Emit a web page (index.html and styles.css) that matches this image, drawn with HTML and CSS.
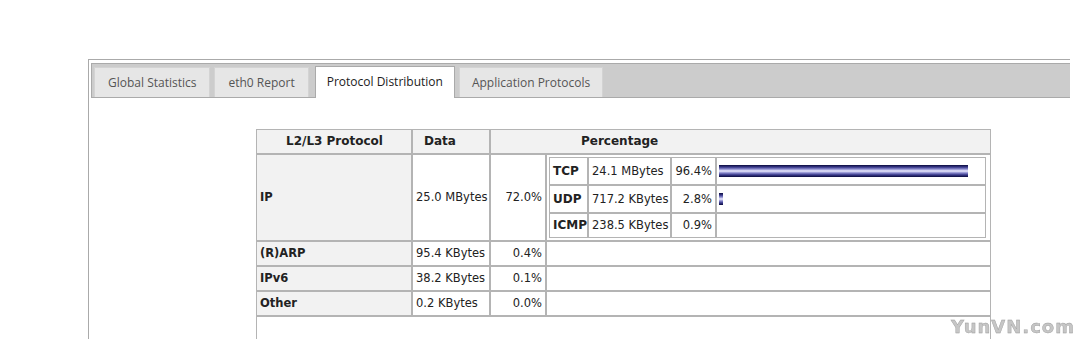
FILE: index.html
```html
<!DOCTYPE html>
<html lang="en">
  <head>
    <meta charset="UTF-8" />
    <title>Protocol Distribution</title>
    <link rel="stylesheet" href="styles.css">
  </head>
  <body>
    <div class="panel">
      <ul class="tabbar">
        <li class="tab">Global Statistics</li>
        <li class="tab">eth0 Report</li>
        <li class="tab active">Protocol Distribution</li>
        <li class="tab narrow">Application Protocols</li>
      </ul>

      <div class="content">
        <table class="stats">
          <colgroup>
            <col class="c-name" />
            <col class="c-data" />
            <col class="c-pct" />
            <col />
          </colgroup>
          <tr>
            <th class="h-proto">L2/L3 Protocol</th>
            <th class="h-data">Data</th>
            <th class="h-pct" colspan="2">Percentage</th>
          </tr>
          <tr class="big">
            <td class="name">IP</td>
            <td>25.0 MBytes</td>
            <td class="num">72.0%</td>
            <td class="nestcell">
              <!-- protokoller inde i IP -->
              <table class="nest">
                <colgroup>
                  <col class="n-name" />
                  <col class="n-data" />
                  <col class="n-pct" />
                  <col />
                </colgroup>
                <tr>
                  <td class="name">TCP</td>
                  <td>24.1 MBytes</td>
                  <td class="num">96.4%</td>
                  <td class="barcell"><div class="bar" style="width: 249px"></div></td>
                </tr>
                <tr>
                  <td class="name">UDP</td>
                  <td>717.2 KBytes</td>
                  <td class="num">2.8%</td>
                  <td class="barcell"><div class="bar" style="width: 4px"></div></td>
                </tr>
                <tr class="last">
                  <td class="name">ICMP</td>
                  <td>238.5 KBytes</td>
                  <td class="num">0.9%</td>
                  <td class="barcell"></td>
                </tr>
              </table>
            </td>
          </tr>
          <tr>
            <td class="name">(R)ARP</td>
            <td>95.4 KBytes</td>
            <td class="num">0.4%</td>
            <td></td>
          </tr>
          <tr>
            <td class="name">IPv6</td>
            <td>38.2 KBytes</td>
            <td class="num">0.1%</td>
            <td></td>
          </tr>
          <tr>
            <td class="name">Other</td>
            <td>0.2 KBytes</td>
            <td class="num">0.0%</td>
            <td></td>
          </tr>
          <tr>
            <td class="footer" colspan="4"></td>
          </tr>
        </table>
      </div>
    </div>

    <div class="watermark">YunVN.com</div>
  </body>
</html>
```

FILE: styles.css
```css
body {
  margin: 8px;
  overflow: hidden;
  background: #fff;
}
.panel {
  margin: 51px 0 0 80px;
  width: 1000px;
  border: 1px solid #aaa;
  padding: 3px 2px 2px;
}
.tabbar {
  display: flex;
  align-items: flex-end;
  gap: 4px;
  list-style: none;
  margin: 0;
  padding: 3px 2px 0;
  background: #ccc;
  border: 1px solid #aaa;
  height: 30px;
}
.tab {
  height: 29px;
  line-height: 29px;
  padding: 0 13px;
  background: #e6e6e6;
  border: 1px solid #d3d3d3;
  border-bottom: none;
  font-family: "Open Sans", sans-serif;
  font-size: 12px;
  color: #555;
}
.tab.active {
  height: 31px;
  padding: 0 11px;
  margin: 0 0 -1px 2px;
  background: #fff;
  border-color: #aaa;
  color: #212121;
}
.tab.narrow {
  padding: 0 12px;
}
.content {
  padding: 31px 0 0 165px;
}
.stats,
.nest {
  border-collapse: separate;
  border-spacing: 0;
  table-layout: fixed;
  font-family: "DejaVu Sans", Verdana, sans-serif;
  font-size: 11.5px;
  color: #222;
}
.stats {
  width: 735px;
}
.stats td,
.stats th {
  border: 1px solid #b4b4b4;
  padding: 4px 3px;
  line-height: 15px;
  text-align: left;
  white-space: nowrap;
}
.stats th {
  background: #f2f2f2;
  font-size: 12px;
}
.h-proto {
  padding-left: 29px !important;
}
.h-data {
  padding-left: 11px !important;
}
.h-pct {
  padding-left: 90px !important;
}
.c-name {
  width: 156px;
}
.c-data {
  width: 78px;
}
.c-pct {
  width: 56px;
}
.stats td.name {
  background: #f2f2f2;
  font-weight: bold;
}
.stats td.num {
  text-align: right;
}
.stats td.nestcell {
  padding: 2px 1px 2px 2px;
}
.nest {
  width: 437px;
}
.n-name {
  width: 39px;
}
.n-data {
  width: 83px;
}
.n-pct {
  width: 45px;
}
.nest td {
  padding: 6px 3px;
  line-height: 14px;
}
.nest td.name {
  background: #fff;
  font-size: 12px;
}
.nest tr.last td {
  padding: 4px 3px 5px;
}
.nest td.barcell {
  padding: 6px 2px;
}
.bar {
  height: 12px;
  background: linear-gradient(
    to bottom,
    #0a0a3c 0%,
    #3a3a8c 18%,
    #8e8ed0 35%,
    #eeeeff 50%,
    #8e8ed0 65%,
    #3a3a8c 82%,
    #0a0a3c 100%
  );
}
.stats td.footer {
  height: 40px;
}
.watermark {
  position: fixed;
  right: 3px;
  bottom: 2px;
  font-family: "DejaVu Sans", sans-serif;
  font-weight: bold;
  font-size: 18px;
  letter-spacing: 1px;
  color: #c6c6c6;
  -webkit-text-stroke: 0.4px #999;
}
```
